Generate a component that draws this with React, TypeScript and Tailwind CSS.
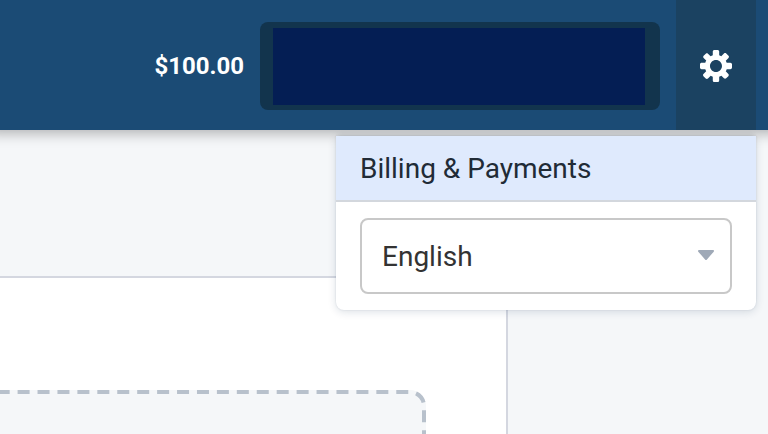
import React from 'react';

interface IconProps {
    className?: string;
}

function CogIcon({ className }: IconProps) {
    return (
        <svg viewBox="0 0 16 16" fill="currentColor" className={className}>
            <path
                fillRule="evenodd"
                d="M15.19 6.39h-1.85c-.11-.37-.27-.71-.45-1.04l1.36-1.36c.31-.31.31-.82 0-1.13l-1.13-1.13c-.31-.31-.82-.31-1.13 0l-1.36 1.36c-.33-.17-.67-.33-1.04-.44V.79c0-.44-.36-.8-.8-.8h-1.6c-.44 0-.8.36-.8.8v1.86c-.39.12-.75.28-1.1.47l-1.3-1.3c-.3-.3-.79-.3-1.09 0L1.82 2.91c-.3.3-.3.79 0 1.09l1.3 1.3c-.2.34-.36.7-.48 1.09H.79c-.44 0-.8.36-.8.8v1.6c0 .44.36.8.8.8h1.85c.11.37.27.71.45 1.04l-1.36 1.36c-.31.31-.31.82 0 1.13l1.13 1.13c.31.31.82.31 1.13 0l1.36-1.36c.33.18.67.33 1.04.44v1.86c0 .44.36.8.8.8h1.6c.44 0 .8-.36.8-.8v-1.86c.39-.12.75-.28 1.1-.47l1.3 1.3c.3.3.79.3 1.09 0l1.09-1.09c.3-.3.3-.79 0-1.09l-1.3-1.3c.19-.35.36-.71.48-1.1h1.85c.44 0 .8-.36.8-.8v-1.6a.816.816 0 00-.81-.79zm-7.2 4.6c-1.66 0-3-1.34-3-3s1.34-3 3-3 3 1.34 3 3-1.34 3-3 3z"
            />
        </svg>
    );
}

function CaretDownIcon({ className }: IconProps) {
    return (
        <svg viewBox="0 0 16 16" fill="currentColor" className={className}>
            <path d="M12 6.5c0-.28-.22-.5-.5-.5h-7a.495.495 0 00-.37.83l3.5 4c.09.1.22.17.37.17s.28-.07.37-.17l3.5-4c.08-.09.13-.2.13-.33z" />
        </svg>
    );
}

function SettingsMenu() {
    return (
        <div className="absolute top-[136px] right-3 z-[5] w-[420px] rounded-b-[8px] bg-white shadow-[0_0_2px_rgba(16,42,80,0.12),0_2px_8px_rgba(16,42,80,0.14),0_-4px_4px_-2px_rgba(0,0,0,0.08)]">
            <a href="#billing" className="flex h-[66px] items-center border-b-2 border-[#d3d7dd] bg-[#dfeafd] px-6 pt-[2px] text-[28px] text-[#212b36]">
                Billing &amp; Payments
            </a>
            <div className="px-6 py-4">
                <button
                    type="button"
                    className="flex h-[76px] w-full items-center justify-between rounded-[8px] border-2 border-[#c8c8c8] bg-white pr-2 pl-5 text-[28px] text-[#333333]"
                >
                    <span className="pt-[2px]">English</span>
                    <CaretDownIcon className="mb-1 size-8 text-[#9fa9b7]" />
                </button>
            </div>
        </div>
    );
}

export default function App() {
    return (
        <div className="relative flex h-[434px] w-[768px] flex-col overflow-hidden bg-[#f5f7f9] font-['Roboto',sans-serif]">
            <header className="flex h-[130px] shrink-0 items-center justify-end bg-[#1b4b75] pt-[2px] pr-3 shadow-[0_-8px_12px_12px_rgba(0,0,0,0.27)]">
                <span className="mr-4 text-[24px] font-bold text-white">$100.00</span>
                <div className="mr-4 h-[88px] w-[400px] rounded-[8px] bg-[#12344d] pt-[6px] pr-[15px] pb-[5px] pl-[13px]">
                    <div className="h-full bg-[#041e54]" />
                </div>
                <button type="button" aria-label="Settings" className="-mt-[2px] flex h-[130px] w-20 items-center justify-center bg-[#1b4261] pt-[2px] text-white">
                    <CogIcon className="size-8" />
                </button>
            </header>

            <main className="flex flex-1 pt-[146px]">
                <section className="h-[158px] w-[508px] border-t-2 border-r-2 border-[#d4d7e0] bg-white pt-[112px]">
                    {/* drop zone */}
                    <svg className="block h-11 w-[426px]" viewBox="0 0 426 44" fill="none">
                        <path d="M0 0H410A16 16 0 0 1 426 16V44H0Z" fill="#f5f7f9" />
                        <path
                            d="M0 2H410A14 14 0 0 1 424 16V44"
                            stroke="#b8c1cc"
                            strokeWidth="4"
                            strokeDasharray="12 7.93"
                            strokeDashoffset="2.33"
                        />
                    </svg>
                </section>
            </main>

            <SettingsMenu />
        </div>
    );
}
